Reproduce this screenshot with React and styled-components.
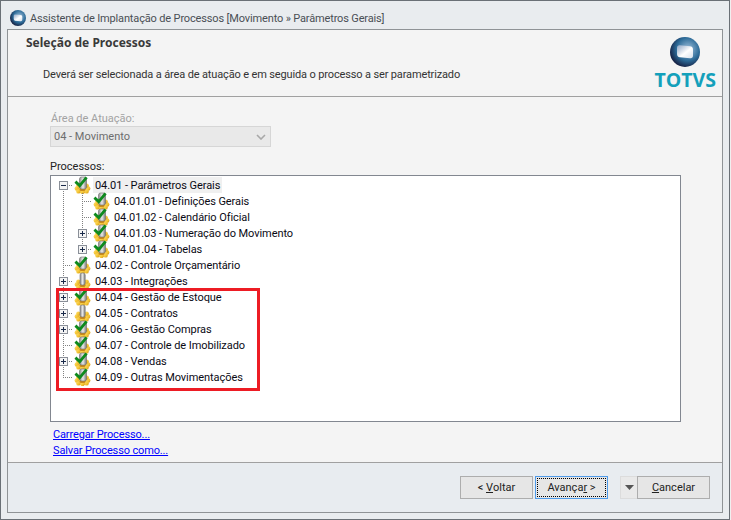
import React from 'react';
import styled, { createGlobalStyle } from 'styled-components';

const GlobalStyle = createGlobalStyle`
  html, body { margin: 0; padding: 0; background: #f0f0f0; }
  * { box-sizing: border-box; }
`;

const FONT = `Roboto, "Liberation Sans", sans-serif`;

const Window = styled.div`
  width: 730px;
  height: 520px;
  display: flex;
  flex-direction: column;
  background: #e9ecef;
  border: 1px solid #6a7076;
  padding: 0 6px 6px;
  font-family: ${FONT};
  font-size: 11px;
  overflow: hidden;
`;

const TitleBar = styled.div`
  height: 28px;
  flex: none;
  display: flex;
  align-items: center;
  gap: 4px;
  padding: 6px 0 0 3px;
  color: #4a4f55;
`;

const TitleText = styled.span`
  padding-top: 1px;
  letter-spacing: -0.15px;
`;

const Panel = styled.div`
  flex: 1;
  display: flex;
  flex-direction: column;
  min-height: 0;
  background: #f4f4f4;
  border: 1px solid #8f9396;
`;

const Header = styled.div`
  height: 67px;
  flex: none;
  display: flex;
  justify-content: space-between;
  border-bottom: 1px solid #a0a0a0;
  padding: 0 6px 0 18px;
`;

const HeaderText = styled.div`
  display: flex;
  flex-direction: column;
`;

const Heading = styled.div`
  margin-top: 5px;
  font-family: "Noto Sans", sans-serif;
  font-weight: 700;
  font-size: 12px;
  line-height: 16px;
  color: #3a3a3a;
`;

const Hint = styled.div`
  margin: 16px 0 0 17px;
  line-height: 16px;
  letter-spacing: -0.14px;
  color: #333;
`;

const Logo = styled.div`
  display: flex;
  flex-direction: column;
  align-items: center;
  padding-top: 7px;
`;

const LogoText = styled.div`
  font-family: "Open Sans", "Liberation Sans", sans-serif;
  font-weight: 700;
  font-size: 19.5px;
  line-height: 20px;
  margin-top: 3px;
  color: #14a0bb;
`;

const Body = styled.div`
  flex: 1;
  min-height: 0;
  display: flex;
  flex-direction: column;
  padding: 14px 41px 0 42px;
`;

const FieldLabel = styled.div`
  line-height: 15px;
  margin-left: ${p => (p.$disabled ? 1 : 0)}px;
  color: ${p => (p.$disabled ? '#a3a3a3' : '#222')};
`;

const Select = styled.div`
  width: 221px;
  height: 21px;
  flex: none;
  display: flex;
  align-items: center;
  justify-content: space-between;
  padding: 0 4px 0 3px;
  background: #e9e9e9;
  border: 1px solid #d6d6d6;
  color: #6d6d6d;
`;

const TreeLabel = styled(FieldLabel)`
  margin-top: 12px;
`;

const TreeBox = styled.div`
  position: relative;
  height: 247px;
  flex: none;
  margin-top: 1px;
  padding: 1px 0 0 3px;
  background: #fff;
  border: 1px solid #828790;
`;

const Highlight = styled.div`
  position: absolute;
  left: 5px;
  top: 112px;
  width: 204px;
  height: 103px;
  border: 3px solid #ed1c24;
  pointer-events: none;
`;

const Row = styled.div`
  display: flex;
  align-items: stretch;
  height: 16px;
  color: #0a0a14;
`;

const dotV = 'repeating-linear-gradient(#808080 0 1px, transparent 1px 2px)';
const dotH = 'repeating-linear-gradient(90deg, #808080 0 1px, transparent 1px 2px)';

/* vertical guide per kind: full cell, from the top to the middle, or middle to the bottom */
const lineSize = { full: '1px 16px', end: '1px 9px', start: '1px 8px' };
const linePos = { full: '9px 0', end: '9px 0', start: '9px 8px' };

/* one indent column of the tree: dotted guide lines plus an optional expander */
const Guide = styled.div`
  width: 19px;
  flex: none;
  display: flex;
  align-items: center;
  padding-left: 5px;
  background-repeat: no-repeat;
  background-image: ${p => (p.$branch ? dotH : 'none')}, ${p => (p.$line ? dotV : 'none')};
  background-size: 10px 1px, ${p => lineSize[p.$line] || '0 0'};
  background-position: 9px 8px, ${p => linePos[p.$line] || '0 0'};
`;

const Expander = styled.svg`
  width: 9px;
  height: 9px;
  display: block;
`;

const RowText = styled.span`
  line-height: 15px;
  padding: 1px 2px 0;
  margin-left: 1px;
  letter-spacing: -0.07px;
  white-space: nowrap;
  background: ${p => (p.$selected ? '#f0f0f0' : 'transparent')};
`;

const GearIcon = styled.svg`
  width: 19px;
  height: 19px;
  flex: none;
  margin-top: -2px;
  display: block;
`;

const Links = styled.div`
  display: flex;
  flex-direction: column;
  margin: 5px 0 0 3px;
  letter-spacing: -0.14px;
`;

const Link = styled.a`
  line-height: 16px;
  color: #0000ff;
  text-decoration: underline;
`;

const Footer = styled.div`
  height: 50px;
  flex: none;
  display: flex;
  align-items: flex-start;
  padding: 13px 0 0 452px;
  background: #e8ecf0;
  border-top: 1px solid #a0a0a0;
`;

const Button = styled.div`
  width: 73px;
  height: 23px;
  flex: none;
  display: flex;
  align-items: center;
  justify-content: center;
  margin-right: ${p => p.$gap || 0}px;
  color: #222;
  background: #e6e6e6;
  border: 1px solid ${p => (p.$focus ? '#4f9bea' : '#adadad')};
  ${p => p.$focus && `outline: 1px dotted #000; outline-offset: -3px;`}
  u { text-underline-offset: 1px; }
`;

const MenuButton = styled.div`
  width: 17px;
  height: 23px;
  flex: none;
  display: flex;
  align-items: center;
  justify-content: center;
  background: #e9e9e9;
  border: 1px solid #dcdcdc;
  border-right: 0;
`;

const Plus = ({ open }) => (
  <Expander viewBox="0 0 9 9">
    <rect x="0.5" y="0.5" width="8" height="8" fill="#f4f4f4" stroke="#8a8f98" />
    <path d="M2 4.5h5" stroke="#1a2a4a" />
    {!open && <path d="M4.5 2v5" stroke="#1a2a4a" />}
  </Expander>
);

const lumps = [
  [3.8, 13.5], [15.2, 13.5], [5.4, 10.6], [13.6, 10.6], [5.4, 16.4], [13.6, 16.4], [9.5, 17],
];

const Gear = ({ checked }) => (
  <GearIcon viewBox="0 0 19 19">
    <defs>
      <linearGradient id="gearFill" x1="0" y1="0" x2="1" y2="1">
        <stop offset="0" stopColor="#ffdf70" />
        <stop offset="0.55" stopColor="#f4c534" />
        <stop offset="1" stopColor="#cf9018" />
      </linearGradient>
      <linearGradient id="postFill" x1="0" y1="0" x2="1" y2="0">
        <stop offset="0" stopColor="#8a8a8a" />
        <stop offset="0.5" stopColor="#e8e8e8" />
        <stop offset="1" stopColor="#777" />
      </linearGradient>
    </defs>
    <g fill="url(#gearFill)">
      <ellipse cx="9.5" cy="13.5" rx="6.4" ry="4.5" />
      {lumps.map(([x, y]) => (
        <circle key={x + '-' + y} cx={x} cy={y} r="2.2" />
      ))}
    </g>
    <ellipse cx="9.5" cy="14.4" rx="3" ry="1.7" fill="#c98a1a" />
    <rect x={checked ? 6.5 : 7} y="2" width={checked ? 7 : 5.2} height="12" rx="2" fill="url(#postFill)" stroke="#6f6f6f" strokeWidth="0.6" />
    {checked && (
      <path d="M2.4 6.6l4.3 4 6.9-8.2" fill="none" stroke="#0e8a1e" strokeWidth="2.8" />
    )}
  </GearIcon>
);

const TreeRow = ({ guides, code, checked, selected }) => (
  <Row>
    {guides.map((g, i) => (
      <Guide key={i} $line={g.line} $branch={g.branch}>
        {g.plus && <Plus open={g.plus === 'open'} />}
      </Guide>
    ))}
    <Gear checked={checked} />
    <RowText $selected={selected}>{code}</RowText>
  </Row>
);

const trunk = { line: 'full' };
const branch = { line: 'full', branch: true };
const closed = { line: 'full', branch: true, plus: 'closed' };

const rows = [
  { guides: [{ line: 'start', branch: true, plus: 'open' }], code: '04.01 - Parâmetros Gerais', checked: true, selected: true },
  { guides: [trunk, branch], code: '04.01.01 - Definições Gerais', checked: true },
  { guides: [trunk, branch], code: '04.01.02 - Calendário Oficial', checked: true },
  { guides: [trunk, closed], code: '04.01.03 - Numeração do Movimento', checked: true },
  { guides: [trunk, { line: 'end', branch: true, plus: 'closed' }], code: '04.01.04 - Tabelas', checked: true },
  { guides: [branch], code: '04.02 - Controle Orçamentário', checked: true },
  { guides: [closed], code: '04.03 - Integrações', checked: false },
  { guides: [closed], code: '04.04 - Gestão de Estoque', checked: true },
  { guides: [closed], code: '04.05 - Contratos', checked: false },
  { guides: [closed], code: '04.06 - Gestão Compras', checked: true },
  { guides: [branch], code: '04.07 - Controle de Imobilizado', checked: true },
  { guides: [closed], code: '04.08 - Vendas', checked: true },
  { guides: [{ line: 'end', branch: true }], code: '04.09 - Outras Movimentações', checked: true },
];

const Globe = ({ size }) => (
  <svg width={size} height={size} viewBox="0 0 30 30" style={{ flex: 'none', display: 'block' }}>
    <defs>
      <radialGradient id="globeFill" cx="0.6" cy="0.4" r="0.65">
        <stop offset="0" stopColor="#9fc0dc" />
        <stop offset="0.6" stopColor="#2c6a97" />
        <stop offset="1" stopColor="#141a3c" />
      </radialGradient>
      <linearGradient id="globeCore" x1="0" y1="0" x2="1" y2="1">
        <stop offset="0" stopColor="#8fa6c6" />
        <stop offset="0.55" stopColor="#ffffff" />
        <stop offset="1" stopColor="#d6e0ec" />
      </linearGradient>
    </defs>
    <circle cx="15" cy="15" r="15" fill="url(#globeFill)" />
    <path d="M7 11q0-3 3-2.7l10 1q3 .3 3 3.2v6q0 3-3 2.7l-10-1q-3-.3-3-3.2z" fill="url(#globeCore)" />
  </svg>
);

const App = () => (
  <>
    <GlobalStyle />
    <Window>
      <TitleBar>
        <Globe size={16} />
        <TitleText>Assistente de Implantação de Processos [Movimento » Parâmetros Gerais]</TitleText>
      </TitleBar>
      <Panel>
        <Header>
          <HeaderText>
            <Heading>Seleção de Processos</Heading>
            <Hint>Deverá ser selecionada a área de atuação e em seguida o processo a ser parametrizado</Hint>
          </HeaderText>
          <Logo>
            <Globe size={30} />
            <LogoText>TOTVS</LogoText>
          </Logo>
        </Header>
        <Body>
          <FieldLabel $disabled>Área de Atuação:</FieldLabel>
          <Select>
            <span>04 - Movimento</span>
            <svg width="10" height="6" viewBox="0 0 10 6">
              <path d="M1 1l4 4 4-4" fill="none" stroke="#a8a8a8" strokeWidth="1.6" />
            </svg>
          </Select>
          <TreeLabel>Processos:</TreeLabel>
          <TreeBox>
            {rows.map(r => (
              <TreeRow key={r.code} {...r} />
            ))}
            <Highlight />
          </TreeBox>
          <Links>
            <Link>Carregar Processo...</Link>
            <Link>Salvar Processo como...</Link>
          </Links>
        </Body>
        <Footer>
          <Button $gap={2}>&lt;&nbsp;<u>V</u>oltar</Button>
          <Button $focus $gap={12}>Avança<u>r</u>&nbsp;&gt;</Button>
          <MenuButton>
            <svg width="9" height="5" viewBox="0 0 9 5">
              <path d="M0 0h9L4.5 5z" fill="#555" />
            </svg>
          </MenuButton>
          <Button><u>C</u>ancelar</Button>
        </Footer>
      </Panel>
    </Window>
  </>
);

export default App;
